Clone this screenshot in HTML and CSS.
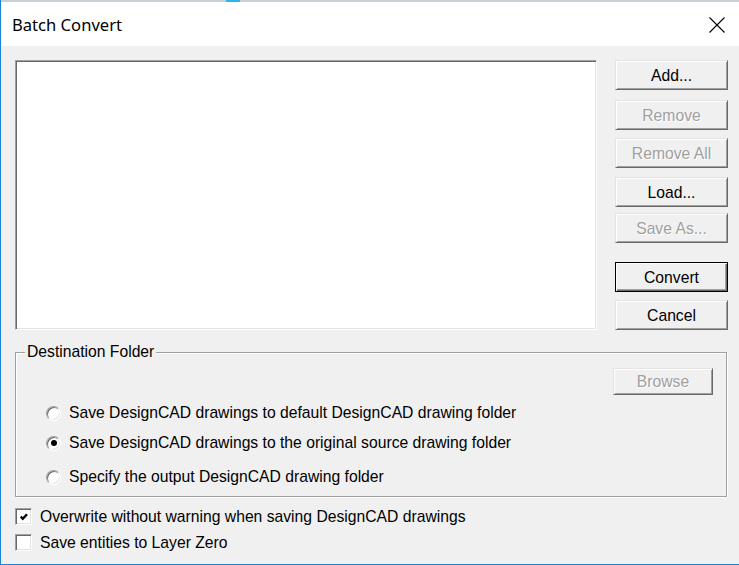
FILE: index.html
```html
<!DOCTYPE html>
<html lang="en">
<head>
    <meta charset="UTF-8">
    <meta name="viewport" content="width=device-width, initial-scale=1.0">
    <title>Batch Convert</title>
    <link rel="stylesheet" href="styles.css">
</head>
<body>
    <div class="screen">
        <div class="backdrop"><span class="backdrop-bit"></span></div>
        <div class="window">
            <div class="titlebar">
                <div class="title">Batch Convert</div>
                <div class="close">
                    <svg width="16" height="16" viewBox="0 0 16 16">
                        <path d="M0.5 0.5 L15.5 15.5 M15.5 0.5 L0.5 15.5" stroke="#000" stroke-width="1.1" fill="none"/>
                    </svg>
                </div>
            </div>

            <div class="content">
                <div class="top-row">
                    <div class="file-list"></div>
                    <div class="buttons">
                        <button class="btn btn-add">Add...</button>
                        <button class="btn btn-remove" disabled>Remove</button>
                        <button class="btn btn-remove-all" disabled>Remove All</button>
                        <button class="btn btn-load">Load...</button>
                        <button class="btn btn-save" disabled>Save As...</button>
                        <button class="btn btn-convert default">Convert</button>
                        <button class="btn btn-cancel">Cancel</button>
                    </div>
                </div>

                <div class="group">
                    <div class="group-title">Destination Folder</div>
                    <div class="browse-row">
                        <button class="btn btn-browse" disabled>Browse</button>
                    </div>
                    <label class="radio-row row-1">
                        <span class="radio"></span>
                        <span>Save DesignCAD drawings to default DesignCAD drawing folder</span>
                    </label>
                    <label class="radio-row row-2">
                        <span class="radio checked"></span>
                        <span>Save DesignCAD drawings to the original source drawing folder</span>
                    </label>
                    <label class="radio-row row-3">
                        <span class="radio"></span>
                        <span>Specify the output DesignCAD drawing folder</span>
                    </label>
                </div>

                <label class="check-row check-1">
                    <span class="checkbox">
                        <svg width="8" height="8" viewBox="0 0 8 8">
                            <path d="M0.8 3.6 L2.8 5.8 L7 1.2" stroke="#000" stroke-width="2.3" fill="none"/>
                        </svg>
                    </span>
                    <span>Overwrite without warning when saving DesignCAD drawings</span>
                </label>
                <label class="check-row check-2">
                    <span class="checkbox"></span>
                    <span>Save entities to Layer Zero</span>
                </label>
            </div>
        </div>
    </div>
</body>
</html>
```

FILE: styles.css
```css
/* Reset and base styles */
* {
    box-sizing: border-box;
    margin: 0;
    padding: 0;
}

body {
    background-color: #f0f0f0;
    font-family: 'Liberation Sans', Arial, sans-serif;
    font-size: 15.7px;
    color: #000;
}

.screen {
    width: 739px;
    height: 565px;
    overflow: hidden;
}

/* Strip of whatever sits behind the dialog */
.backdrop {
    height: 2px;
    background-color: #c9d0d6;
    border-left: 1px solid #1a84d8;
    display: flex;
}

.backdrop-bit {
    width: 14px;
    margin-left: 225px;
    background-color: #29b6e8;
}

/* Dialog window */
.window {
    height: 563px;
    border-left: 1px solid #1a84d8;
    border-bottom: 1px solid #1a84d8;
    background-color: #f0f0f0;
}

.titlebar {
    height: 44px;
    background-color: #fff;
    display: flex;
    align-items: center;
    justify-content: space-between;
    padding: 0 14px 0 11px;
}

.title {
    font-family: 'Noto Sans', 'Open Sans', sans-serif;
    font-size: 16.6px;
    color: #000;
}

.close {
    width: 16px;
    height: 16px;
    margin-top: 1px;
}

.close svg {
    display: block;
}

.content {
    padding: 14px 0 0 14px;
}

/* List and side buttons */
.top-row {
    display: flex;
}

.file-list {
    width: 582px;
    height: 270px;
    background-color: #fff;
    border: 1px solid;
    border-color: #a0a0a0 #fff #fff #a0a0a0;
    box-shadow: inset 1px 1px 0 #696969, inset -1px -1px 0 #e3e3e3;
}

.buttons {
    width: 113px;
    margin-left: 18px;
    display: flex;
    flex-direction: column;
}

.btn {
    font-family: inherit;
    font-size: inherit;
    color: #000;
    background-color: #f0f0f0;
    height: 30px;
    padding-top: 1px;
    border: 1px solid;
    border-color: #e3e3e3 #696969 #696969 #e3e3e3;
    box-shadow: inset 1px 1px 0 #fff, inset -1px -1px 0 #a0a0a0;
    cursor: pointer;
}

.btn:disabled {
    color: #a0a0a0;
    text-shadow: 1px 1px 0 #fff;
    cursor: default;
}

.btn.default {
    border-color: #000;
    box-shadow: inset 1px 1px 0 #fff, inset -1px -1px 0 #696969, inset -2px -2px 0 #a0a0a0;
}

.btn-remove { margin-top: 10px; }
.btn-remove-all { margin-top: 8px; }
.btn-load { margin-top: 9px; }
.btn-save { margin-top: 6px; }
.btn-convert { margin-top: 19px; }
.btn-cancel { margin-top: 8px; }

/* Destination folder group */
.group {
    position: relative;
    width: 712px;
    margin-top: 22px;
    padding: 15px 13px 8px 30px;
    border: 1px solid #a0a0a0;
    box-shadow: inset 1px 1px 0 #fff, 1px 1px 0 #fff;
}

.group-title {
    position: absolute;
    top: -10px;
    left: 9px;
    padding: 0 2px;
    line-height: 18px;
    background-color: #f0f0f0;
}

.browse-row {
    display: flex;
    justify-content: flex-end;
}

.btn-browse {
    width: 100px;
    height: 27px;
}

.radio-row {
    height: 22px;
    display: flex;
    align-items: center;
    gap: 8px;
}

.row-1 { margin-top: 7px; }
.row-2 { margin-top: 8px; }
.row-3 { margin-top: 12px; }

.radio {
    position: relative;
    flex-shrink: 0;
    width: 15px;
    height: 15px;
    border-radius: 50%;
    background-color: #fff;
    border: 1px solid;
    border-color: #a0a0a0 #fff #fff #a0a0a0;
    box-shadow: inset 1px 1px 0 #696969, inset -1px -1px 0 #e3e3e3;
}

.radio.checked::after {
    content: '';
    position: absolute;
    top: 3.5px;
    left: 3.5px;
    width: 6px;
    height: 6px;
    border-radius: 50%;
    background-color: #000;
}

/* Checkboxes below the group */
.check-row {
    height: 17px;
    display: flex;
    align-items: center;
    gap: 8px;
}

.check-1 { margin-top: 11px; }
.check-2 { margin-top: 9px; }

.checkbox {
    flex-shrink: 0;
    width: 17px;
    height: 17px;
    background-color: #fff;
    border: 1px solid;
    border-color: #a0a0a0 #fff #fff #a0a0a0;
    box-shadow: inset 1px 1px 0 #696969, inset -1px -1px 0 #e3e3e3;
    display: flex;
    align-items: center;
    justify-content: center;
}

.checkbox svg {
    display: block;
}
```
